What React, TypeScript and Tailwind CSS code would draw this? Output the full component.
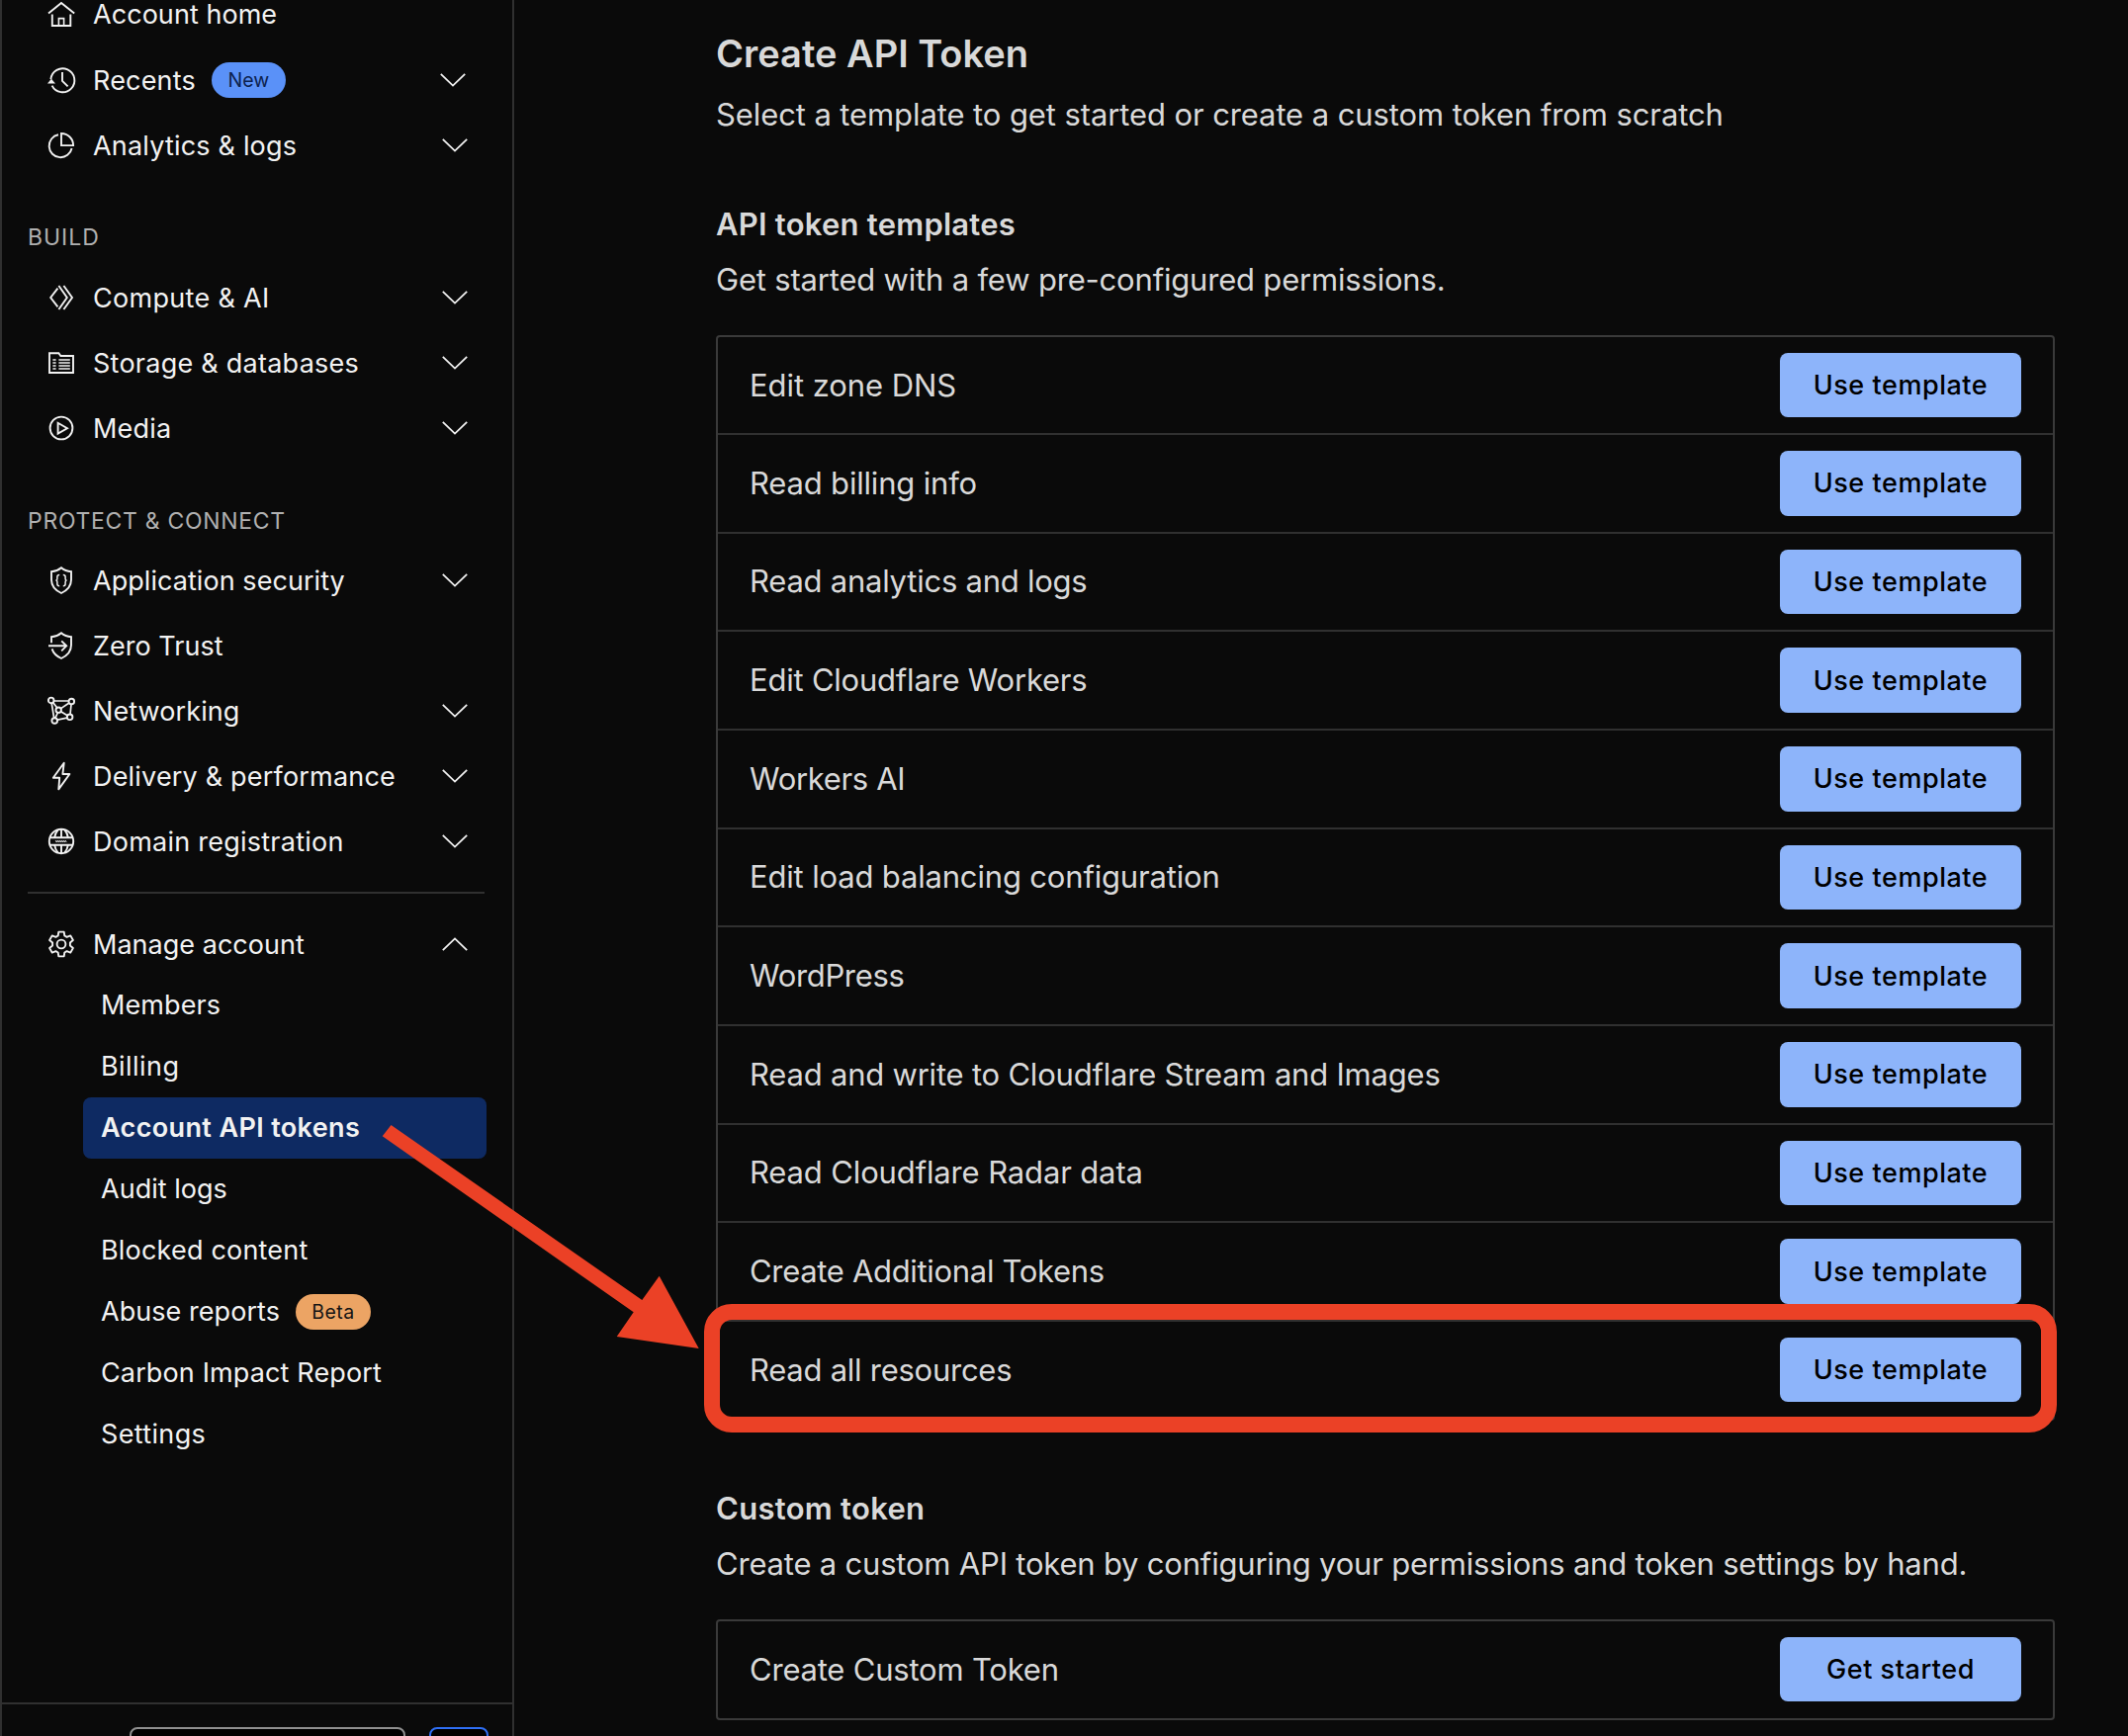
import type { ReactNode } from "react";

function Icon({ children }: { children: ReactNode }) {
  return (
    <svg
      viewBox="0 0 28 28"
      className="-mt-[2px] size-7 shrink-0 overflow-visible"
      fill="none"
      stroke="#f2f2f2"
      strokeWidth="1.9"
    >
      {children}
    </svg>
  );
}

const HomeIcon = () => (
  <Icon>
    <path d="M1 13.6 14 3l13.2 10.6" />
    <path d="M4.8 14.6V26h18.5V14.6" />
    <path d="M11.4 26v-7.4h5.2V26" strokeWidth="1.6" />
  </Icon>
);
const RecentsIcon = () => (
  <Icon>
    <path d="M3.4 13.2A12 12 0 1 1 4.6 19.6" />
    <path d="M15 6v8.8l5.6 5.6" />
    <path d="M0 17.4 3.9 12.8 8 17.4Z" fill="#f2f2f2" stroke="none" />
  </Icon>
);
const PieIcon = () => (
  <Icon>
    <path d="M11 3.2A11.6 11.6 0 1 0 24.6 17" />
    <path d="M14 2v12.1h12.1A12.1 12.1 0 0 0 14 2Z" />
  </Icon>
);
const ComputeIcon = () => (
  <Icon>
    <path d="M10.4 4.6 3.2 14l7.2 9.4" />
    <path d="M11.4 2l8.4 12-8.4 12" />
    <path d="M16.4 2l8.6 12-8.6 12" />
  </Icon>
);
const StorageIcon = () => (
  <Icon>
    <path d="M2 4.2h9.4l2 2.8H26v17H2Z" />
    <path d="M5.4 11h3.2M11.4 11h11.4M5.4 14h3.2M11.4 14h11.4M5.4 17h3.2M11.4 17h11.4M5.4 20h3.2M11.4 20h11.4" strokeWidth="1.5" />
  </Icon>
);
const MediaIcon = () => (
  <Icon>
    <circle cx="14" cy="14" r="11.4" />
    <path d="M10.6 8.8v10.8l9.4-5.4Z" />
  </Icon>
);
const AppSecurityIcon = () => (
  <Icon>
    <path d="M14 1.2c3 2.6 6.400 3.700 10 4v8.400c0 6-3.900 10.600-10 13.400C7.900 24.200 4 19.600 4 13.600V5.200c3.600-.3 7-1.400 10-4Z" />
    <path d="M12.200 8.600c-1.900 0-2.300.7-2.300 2v1.800c0 1-.4 1.700-1.500 1.700 1.100 0 1.500.7 1.500 1.700v1.900c0 1.300.4 2 2.300 2M15.800 8.600c1.900 0 2.300.7 2.300 2v1.800c0 1 .4 1.700 1.500 1.700-1.100 0-1.500.7-1.500 1.700v1.900c0 1.300-.4 2-2.300 2" strokeWidth="1.500" />
  </Icon>
);
const ZeroTrustIcon = () => (
  <Icon>
    <path d="M4 11.200V5.200c3.600-.3 7-1.400 10-4 3 2.600 6.400 3.700 10 4v8.400c0 6-3.900 10.600-10 13.400-4.700-2.200-8.100-5.400-9.400-9.600" />
    <path d="M1 14.300h18M14.200 9.300l5 5-5 5" />
  </Icon>
);
const NetworkIcon = () => (
  <Icon>
    <path d="M6.600 4h14.800M4.200 6.200l2.400 14.900M24 7.600l-1 10M10 23.200l9.800-2M5.600 5.400l4 5.400M21.600 6.200l-8 5.400M13.600 14.700l6.600 4M10.400 15.800 8 21.100" strokeWidth="1.700" />
    <circle cx="3.700" cy="3.400" r="2.800" />
    <circle cx="24.300" cy="4.500" r="2.800" />
    <circle cx="11.200" cy="13.200" r="2.700" />
    <circle cx="22.600" cy="20.300" r="2.800" />
    <circle cx="7.200" cy="24" r="2.800" />
  </Icon>
);
const BoltIcon = () => (
  <Icon>
    <path d="M16.700.8 5.800 15.800h6.400l-.9 11.600L22.400 12h-7Z" strokeLinejoin="round" />
  </Icon>
);
const GlobeIcon = () => (
  <Icon>
    <circle cx="14" cy="14" r="12.200" />
    <path d="M2.300 10.300h23.400M2.300 17.700h23.400" />
    <path d="M14 2v8.300M14 17.700V26M10.700 2.400C8.800 4.600 7.600 7.300 7.100 10.300M17.300 2.400c1.900 2.200 3.100 4.900 3.600 7.900M7.100 17.700c.5 3 1.700 5.700 3.600 7.900M20.900 17.700c-.5 3-1.700 5.700-3.600 7.900" />
    <path d="M8.200 13.200l1 1.700 1-1.700 1 1.700 1-1.700 1 1.700 1-1.700 1 1.700 1-1.700 1 1.700 1-1.700 1 1.700" strokeWidth="1" />
  </Icon>
);
const GearIcon = () => (
  <Icon>
    <path
      d="M11.300 1.600h5.400l.6 3.900 2.300 1.300 3.700-1.400 2.600 4.600-3 2.500v3l3 2.500-2.600 4.600-3.700-1.400-2.300 1.300-.6 3.900h-5.400l-.6-3.900-2.300-1.300-3.700 1.400L2.100 18l3-2.500v-3l-3-2.500 2.600-4.600 3.700 1.400 2.300-1.300Z"
      strokeLinejoin="round"
    />
    <circle cx="14" cy="14" r="4.400" />
  </Icon>
);

function Chevron({ up = false, className = "" }: { up?: boolean; className?: string }) {
  return (
    <svg viewBox="0 0 26 14" className={`-mt-[2px] ml-auto h-[14px] w-[26px] shrink-0 ${className}`} fill="none" stroke="#f2f2f2" strokeWidth="1.800">
      <path d={up ? "M.8 13.200 13 1.400l12.200 11.800" : "M.8.8 13 12.600 25.200.8"} />
    </svg>
  );
}

type Item = { label: string; track: string; icon: () => ReactNode; chevron?: boolean };

const build: Item[] = [
  { label: "Compute & AI", track: "tracking-[0.31px]", icon: ComputeIcon, chevron: true },
  { label: "Storage & databases", track: "tracking-[0.25px]", icon: StorageIcon, chevron: true },
  { label: "Media", track: "tracking-[0.17px]", icon: MediaIcon, chevron: true },
];

const protect: Item[] = [
  { label: "Application security", track: "tracking-[0.05px]", icon: AppSecurityIcon, chevron: true },
  { label: "Zero Trust", track: "tracking-[0.03px]", icon: ZeroTrustIcon },
  { label: "Networking", track: "tracking-[0.09px]", icon: NetworkIcon, chevron: true },
  { label: "Delivery & performance", track: "tracking-[0.19px]", icon: BoltIcon, chevron: true },
  { label: "Domain registration", track: "tracking-[0.24px]", icon: GlobeIcon, chevron: true },
];

const account = [
  { label: "Members", track: "tracking-[0.08px]" },
  { label: "Billing", track: "tracking-[0.45px]" },
  { label: "Account API tokens", track: "tracking-[0.36px]", active: true },
  { label: "Audit logs", track: "tracking-[0.02px]" },
  { label: "Blocked content", track: "tracking-[0.19px]" },
  { label: "Abuse reports", track: "tracking-[0.05px]", beta: true },
  { label: "Carbon Impact Report", track: "tracking-[0.13px]" },
  { label: "Settings", track: "tracking-[0.35px]" },
];

const templates = [
  { label: "Edit zone DNS", track: "tracking-[-0.07px]" },
  { label: "Read billing info", track: "tracking-[-0.18px]" },
  { label: "Read analytics and logs", track: "tracking-[-0.24px]" },
  { label: "Edit Cloudflare Workers", track: "tracking-[-0.22px]" },
  { label: "Workers AI", track: "tracking-[-0.34px]" },
  { label: "Edit load balancing configuration", track: "tracking-[-0.17px]" },
  { label: "WordPress", track: "tracking-[-0.33px]" },
  { label: "Read and write to Cloudflare Stream and Images", track: "tracking-[-0.21px]" },
  { label: "Read Cloudflare Radar data", track: "tracking-[-0.14px]" },
  { label: "Create Additional Tokens", track: "tracking-[-0.32px]" },
  { label: "Read all resources", track: "tracking-[-0.26px]" },
];

function NavRow({ label, track, icon: RowIcon, chevron }: Item) {
  return (
    <a className="flex h-[66px] items-center pr-[45px] pl-[46px]">
      <RowIcon />
      <span className={`ml-[18px] ${track}`}>{label}</span>
      {chevron && <Chevron />}
    </a>
  );
}

function Sidebar() {
  return (
    <aside className="flex h-full w-[520px] shrink-0 flex-col overflow-hidden border-x-2 border-[#303030] text-[27px] leading-[36px] text-[#f2f2f2]">
      <nav className="-mt-[18px] flex flex-1 flex-col">
        <NavRow label="Account home" track="tracking-[0.05px]" icon={HomeIcon} />
        <a className="mt-px flex h-[66px] items-center pr-[47px] pl-[46px]">
          <RecentsIcon />
          <span className="ml-[18px] tracking-[0.18px]">Recents</span>
          <span className="-mt-[2px] ml-4 flex h-9 w-[75px] items-center justify-center rounded-full bg-[#5a91f8] text-[19.5px] tracking-[0.1px] text-[#0c2250]">
            New
          </span>
          <Chevron />
        </a>
        <NavRow label="Analytics & logs" track="tracking-[0.19px]" icon={PieIcon} chevron />

        <h3 className="mt-[41px] mb-[11px] pl-[26px] text-[23px] tracking-[0.95px] text-[#b0b0b0]">BUILD</h3>
        {build.map((item) => (
          <NavRow key={item.label} {...item} />
        ))}

        <h3 className="mt-[42px] mb-[10px] pl-[26px] text-[23px] tracking-[0.7px] text-[#b0b0b0]">PROTECT &amp; CONNECT</h3>
        {protect.map((item) => (
          <NavRow key={item.label} {...item} />
        ))}

        <hr className="mt-[17px] mr-[28px] mb-[22px] ml-[26px] border-t-2 border-[#303030]" />

        <a className="flex h-[60px] items-center pr-[45px] pl-[46px]">
          <GearIcon />
          <span className="ml-[18px] tracking-[0.02px]">Manage account</span>
          <Chevron up />
        </a>
        <ul className="mr-[26px] ml-[82px]">
          {account.map(({ label, track, active, beta }) => (
            <li
              key={label}
              className={`flex h-[62px] items-center rounded-lg pl-[18px] ${track} ${active ? "bg-[#0e2a62] font-semibold" : ""}`}
            >
              {label}
              {beta && (
                <span className="ml-4 flex h-9 w-[76px] items-center justify-center rounded-full bg-[#eca464] text-[19.5px] tracking-[0.5px] text-[#141414]">
                  Beta
                </span>
              )}
            </li>
          ))}
        </ul>
      </nav>
      <footer className="flex h-[34px] gap-6 border-t-2 border-[#303030] pt-[23px] pl-[129px]">
        <div className="h-16 w-[279px] shrink-0 rounded-lg border-2 border-[#8f8f8f] bg-black" />
        <div className="h-16 w-[60px] shrink-0 rounded-lg border-2 border-[#2f6ff5] bg-black" />
      </footer>
    </aside>
  );
}

function ActionButton({ children }: { children: ReactNode }) {
  return (
    <button className="flex h-[65.5px] w-[244px] items-center justify-center rounded-lg bg-[#8db4fa] pt-px text-[27px] font-medium tracking-[0.54px] text-black">
      {children}
    </button>
  );
}

export default function App() {
  return (
    <div className="relative flex h-[1756px] w-[2152px] overflow-hidden bg-[#0a0a0a] font-['Inter',sans-serif]">
      <Sidebar />

      <main className="ml-[204px] w-[1354px] text-[31px] leading-[40px] whitespace-nowrap text-[#d9d9d9]">
        <h1 className="mt-[30px] text-[38px] leading-[48px] font-semibold">Create API Token</h1>
        <p className="mt-[18px] tracking-[-0.1px]">
          Select a template to get started or create a custom token from scratch
        </p>

        <h2 className="mt-[71px] font-semibold tracking-[0.23px]">API token templates</h2>
        <p className="mt-4 tracking-[-0.19px]">Get started with a few pre-configured permissions.</p>

        <div className="mt-9 rounded-[4px] border-2 border-[#3a3a3a]">
          {templates.map(({ label, track }, i) => (
            <div
              key={label}
              className={`flex items-center justify-between px-8 ${i === 0 ? "h-[97px]" : "h-[99.67px] border-t-2 border-[#303030]"}`}
            >
              <span className={track}>{label}</span>
              <ActionButton>Use template</ActionButton>
            </div>
          ))}
        </div>

        <h2 className="mt-[69px] font-semibold tracking-[0.29px]">Custom token</h2>
        <p className="mt-4 tracking-[-0.2px]">
          Create a custom API token by configuring your permissions and token settings by hand.
        </p>
        <div className="mt-9 flex h-[102px] items-center justify-between rounded-[4px] border-2 border-[#3a3a3a] px-8">
          <span className="tracking-[-0.21px]">Create Custom Token</span>
          <ActionButton>Get started</ActionButton>
        </div>
      </main>

      <div className="absolute top-[1319px] left-[712px] h-[130px] w-[1368px] rounded-[28px] border-[16px] border-[#eb4126]" />
      <svg className="absolute top-[1130px] left-[380px]" width="340" height="240" viewBox="380 1130 340 240">
        <path d="M386.700 1149.300 395.500 1138 649.300 1315 666.700 1290.700 706.700 1364 623.700 1352 640.700 1327.300Z" fill="#eb4126" />
      </svg>
    </div>
  );
}
